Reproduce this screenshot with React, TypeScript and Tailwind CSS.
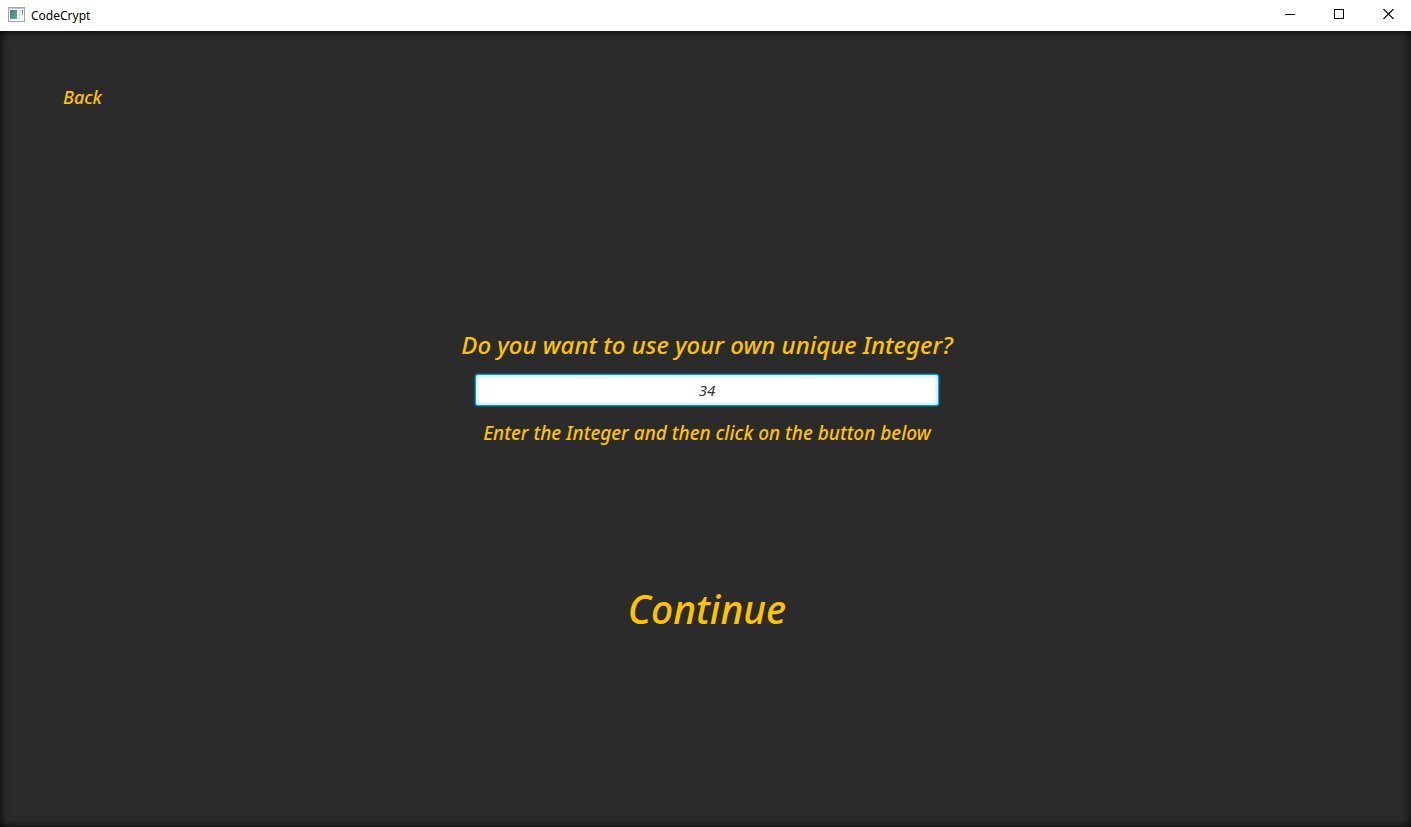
import { useState } from "react";

function AppIcon() {
  return (
    <svg width="18" height="16" viewBox="0 0 18 16" aria-hidden="true">
      <defs>
        <linearGradient id="screen" x1="0" y1="0" x2="1" y2="1">
          <stop offset="0" stopColor="#4476a8" />
          <stop offset="1" stopColor="#5fb37c" />
        </linearGradient>
        <linearGradient id="meter" x1="0" y1="0" x2="0" y2="1">
          <stop offset="0" stopColor="#3f70b4" />
          <stop offset="1" stopColor="#7cc48a" />
        </linearGradient>
      </defs>
      <rect x="0.5" y="0.5" width="16" height="14" fill="#f5f6f7" stroke="#a3a7ab" />
      <rect x="1" y="1" width="15" height="1" fill="#c3c7ca" />
      <rect x="2" y="3" width="7" height="9" fill="url(#screen)" />
      <rect x="10" y="3" width="3" height="6" fill="#e3e5e8" />
      <rect x="10" y="10" width="3" height="2" fill="#e3e5e8" />
      <rect x="14" y="3" width="1" height="5" fill="url(#meter)" />
    </svg>
  );
}

function TitleBar() {
  return (
    <header className="flex h-[31px] items-start justify-between bg-white text-black">
      <div className="flex h-[29px] items-center gap-[5px] pl-2">
        <AppIcon />
        <span className="pt-[2px] font-['Noto_Sans',sans-serif] text-[12px] leading-4">CodeCrypt</span>
      </div>
      <div className="flex h-7">
        <button type="button" aria-label="Minimize" className="flex w-[50px] items-center justify-center">
          <svg width="10" height="10" viewBox="0 0 10 10" shapeRendering="crispEdges">
            <path d="M0 5.5h10" stroke="#000" />
          </svg>
        </button>
        <button type="button" aria-label="Maximize" className="flex w-12 items-center justify-center">
          <svg width="10" height="10" viewBox="0 0 10 10" shapeRendering="crispEdges">
            <rect x="0.5" y="0.5" width="9" height="9" fill="none" stroke="#000" />
          </svg>
        </button>
        <button type="button" aria-label="Close" className="mr-[-3px] flex w-[51px] items-center justify-center">
          <svg width="11" height="10" viewBox="0 0 11 10">
            <path d="M0.5 0l10 10M10.5 0l-10 10" stroke="#000" strokeWidth="1.1" />
          </svg>
        </button>
      </div>
    </header>
  );
}

export default function App() {
  const [value, setValue] = useState("34");

  return (
    <div className="flex min-h-screen flex-col overflow-x-hidden">
      <TitleBar />
      <main className="flex flex-1 flex-col bg-[#2b2b2b] font-['Noto_Sans',sans-serif] text-[#ffc400] italic shadow-[inset_0_0_10px_#000000]">
        <nav className="flex px-[63px] pt-[54px]">
          <button type="button" className="text-[18px] leading-6 font-medium italic">
            Back
          </button>
        </nav>
        <form
          className="flex flex-col items-center pt-[220px] pl-[3px]"
          onSubmit={(event) => event.preventDefault()}
        >
          <label htmlFor="integer" className="text-[24px] leading-8 font-medium">
            Do you want to use your own unique Integer?
          </label>
          <input
            id="integer"
            type="text"
            inputMode="numeric"
            value={value}
            onChange={(event) => setValue(event.target.value)}
            className="mt-[13px] h-8 w-[464px] max-w-full rounded-[3px] border border-[#039ed3] bg-white text-center text-[15px] text-[#333333] italic shadow-[0_0_2px_#039ed3,inset_0_0_4px_1px_#b5e2f1] outline-none"
          />
          <p className="mt-[15px] text-[19px] leading-6 font-medium">
            Enter the Integer and then click on the button below
          </p>
          <button type="submit" className="mt-[136px] text-[39px] leading-[56px] font-medium italic">
            Continue
          </button>
        </form>
      </main>
    </div>
  );
}
